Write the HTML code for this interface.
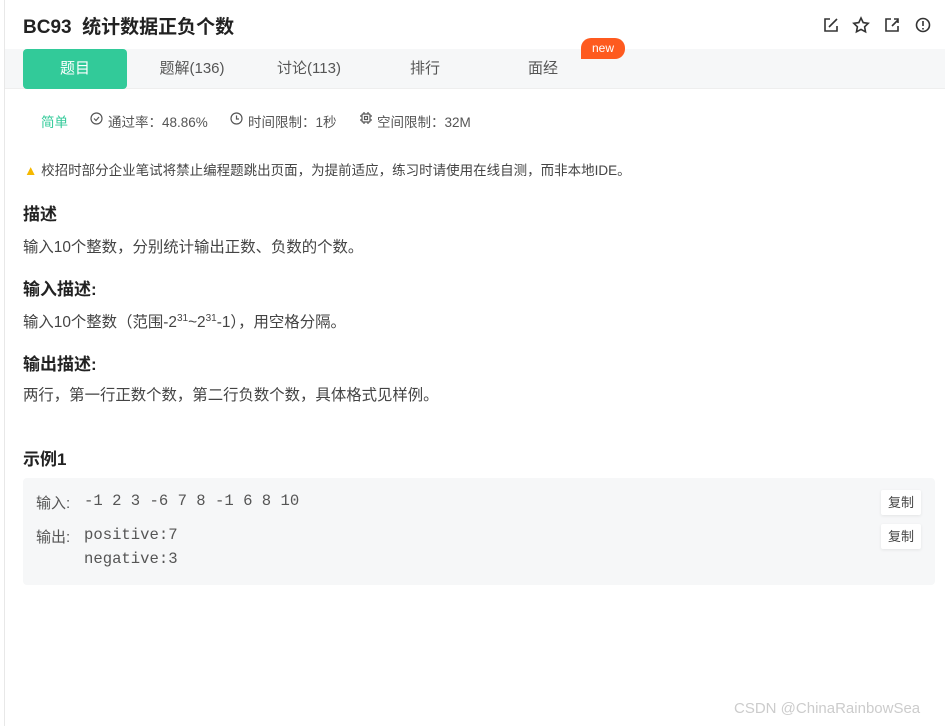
<!DOCTYPE html>
<html><head><meta charset="utf-8"><style>
*{margin:0;padding:0;box-sizing:border-box}
body{width:945px;height:726px;background:#fff;font-family:"Liberation Sans","Noto Sans CJK SC",sans-serif;color:#333;position:relative;overflow:hidden}
.a{position:absolute;white-space:nowrap}
.lb{position:absolute;left:4px;top:0;width:1px;height:726px;background:#e8e8e8}
.title{left:23px;top:12px;font-size:19px;font-weight:bold;color:#222}
.bar{left:5px;top:49px;width:940px;height:40px;background:#f6f7f8;border-bottom:1px solid #eee}
.tab{top:49px;height:40px;line-height:40px;font-size:15px;color:#555;text-align:center}
.act{left:23px;width:104px;background:#32ca99;color:#fff;border-radius:4px}
.new{left:581px;top:38px;width:44px;height:21px;background:#fe5a1f;color:#fff;font-size:12px;text-align:center;line-height:20px;border-radius:10px 10px 10px 0}
.meta{top:111px;font-size:13.5px;color:#555}
h3{position:absolute;font-size:17px;font-weight:bold;color:#222;white-space:nowrap}
.p{font-size:15.4px;color:#444}
.box{left:23px;top:478px;width:912px;height:107px;background:#f6f7f8;border-radius:4px}
.mono{font-family:"Liberation Mono",monospace;font-size:15.6px;color:#555}
.cp{width:40px;height:25px;background:#fff;font-size:13px;line-height:25px;text-align:center;color:#444;box-shadow:0 1px 3px rgba(0,0,0,.08);border-radius:2px}
</style></head><body>
<div class="lb"></div>
<div class="a title">BC93&nbsp; 统计数据正负个数</div>
<svg class="a" style="left:822px;top:16px" width="110" height="18" viewBox="0 0 110 18" fill="none" stroke="#333" stroke-width="1.6">
<path d="M8 3H3v12h12v-5"/><path d="M7 11l8-8"/>
<path d="M39 2l2.2 4.6 5 .7-3.6 3.5.9 5-4.5-2.4-4.5 2.4.9-5-3.6-3.5 5-.7z"/>
<path d="M69 3h-5v12h12v-5"/><path d="M70 10l6-6M72 3h4v4"/>
<circle cx="101" cy="9" r="6.5"/><path d="M101 5v5M101 12v1.5"/>
</svg>
<div class="a bar"></div>
<div class="a tab act">题目</div>
<div class="a tab" style="left:150px;width:84px">题解(136)</div>
<div class="a tab" style="left:270px;width:78px">讨论(113)</div>
<div class="a tab" style="left:400px;width:50px">排行</div>
<div class="a tab" style="left:518px;width:50px">面经</div>
<div class="a new">new</div>
<div class="a meta" style="left:41px;color:#32ca99">简单</div>
<svg class="a" style="left:90px;top:112px" width="13" height="13" viewBox="0 0 13 13" fill="none" stroke="#555" stroke-width="1.2"><circle cx="6.5" cy="6.5" r="5.5"/><path d="M4 6.5l2 2 3-3.5"/></svg>
<div class="a meta" style="left:108px">通过率：48.86%</div>
<svg class="a" style="left:230px;top:112px" width="13" height="13" viewBox="0 0 13 13" fill="none" stroke="#555" stroke-width="1.2"><circle cx="6.5" cy="6.5" r="5.5"/><path d="M6.5 3.5v3.5h2.5"/></svg>
<div class="a meta" style="left:248px">时间限制：1秒</div>
<svg class="a" style="left:359px;top:111px" width="14" height="14" viewBox="0 0 14 14" fill="none" stroke="#555" stroke-width="1.2"><rect x="3" y="3" width="8" height="8" rx="1"/><rect x="5.5" y="5.5" width="3" height="3"/><path d="M5 1v2M9 1v2M5 11v2M9 11v2M1 5h2M1 9h2M11 5h2M11 9h2"/></svg>
<div class="a meta" style="left:377px">空间限制：32M</div>
<div class="a" style="left:24px;top:159px;font-size:13.5px;color:#444"><span style="color:#f5b800">▲</span> 校招时部分企业笔试将禁止编程题跳出页面，为提前适应，练习时请使用在线自测，而非本地IDE。</div>
<h3 style="left:23px;top:200px">描述</h3>
<div class="a p" style="left:23px;top:235px">输入10个整数，分别统计输出正数、负数的个数。</div>
<h3 style="left:23px;top:275px">输入描述:</h3>
<div class="a p" style="left:23px;top:310px">输入10个整数（范围-2<sup style="font-size:10px">31</sup>~2<sup style="font-size:10px">31</sup>-1），用空格分隔。</div>
<h3 style="left:23px;top:350px">输出描述:</h3>
<div class="a p" style="left:23px;top:383px">两行，第一行正数个数，第二行负数个数，具体格式见样例。</div>
<h3 style="left:23px;top:445px">示例1</h3>
<div class="a box"></div>
<div class="a p" style="left:36px;top:492px;color:#555;font-size:15px">输入:</div>
<div class="a mono" style="left:84px;top:492px">-1 2 3 -6 7 8 -1 6 8 10</div>
<div class="a p" style="left:36px;top:526px;color:#555;font-size:15px">输出:</div>
<div class="a mono" style="left:84px;top:526px">positive:7</div>
<div class="a mono" style="left:84px;top:550px">negative:3</div>
<div class="a cp" style="left:881px;top:490px">复制</div>
<div class="a cp" style="left:881px;top:524px">复制</div>
<div class="a" style="left:734px;top:700px;font-size:15px;color:#ccc">CSDN @ChinaRainbowSea</div>
</body></html>
